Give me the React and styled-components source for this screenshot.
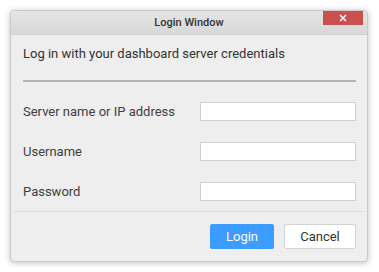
import styled, { createGlobalStyle } from 'styled-components';

const GlobalStyle = createGlobalStyle`
  html, body {
    margin: 0;
    padding: 0;
    background: #ffffff;
  }
  body {
    font-family: Roboto, "Liberation Sans", sans-serif;
  }
`;

const Page = styled.div`
  width: 379px;
  height: 272px;
  padding: 10px 11px 0 10px;
  box-sizing: border-box;
`;

const Window = styled.div`
  width: 358px;
  height: 252px;
  background: #eeeeee;
  border: 1px solid #c9c9c9;
  border-radius: 4px;
  box-shadow: 0 1px 6px rgba(0, 0, 0, 0.25);
  box-sizing: border-box;
  display: flex;
  flex-direction: column;
  overflow: hidden;
`;

const TitleBar = styled.div`
  position: relative;
  height: 23px;
  flex: none;
  background: linear-gradient(#e4e4e4, #d8d8d8);
  border-bottom: 1px solid #d0d0d0;
  display: flex;
  align-items: center;
  justify-content: center;
  font-size: 11px;
  font-weight: 500;
  color: #333333;
`;

const CloseButton = styled.button`
  position: absolute;
  top: -1px;
  right: 4px;
  width: 40px;
  height: 15px;
  border: none;
  padding: 0;
  background: #c9504f;
  display: flex;
  align-items: center;
  justify-content: center;
`;

const Body = styled.div`
  padding: 11px 11px 0 12px;
  flex: 1;
`;

const Intro = styled.div`
  font-size: 13px;
  color: #333333;
  line-height: 16px;
`;

const Divider = styled.div`
  margin-top: 18px;
  height: 2px;
  background: #b4b4b4;
`;

const Form = styled.div`
  margin-top: 20px;
  display: flex;
  flex-direction: column;
  gap: 20px;
`;

const Row = styled.div`
  display: flex;
  align-items: center;
  justify-content: space-between;
  height: 19px;
  & + & {
    margin-top: ${p => p.$nudge || 0}px;
  }
`;

const Label = styled.label`
  font-size: 13px;
  color: #404040;
`;

const Input = styled.input`
  width: 156px;
  height: 19px;
  box-sizing: border-box;
  border: 1px solid #cfcfcf;
  background: #ffffff;
  padding: 0 4px;
  margin: 0;
  outline: none;
`;

const Footer = styled.div`
  border-top: 1px solid #dcdcdc;
  margin: 0 2px;
  height: 48px;
  flex: none;
  display: flex;
  align-items: center;
  justify-content: flex-end;
  gap: 10px;
  padding-right: 9px;
  padding-bottom: 1px;
`;

const Button = styled.button`
  height: 25px;
  width: ${p => p.$width}px;
  box-sizing: border-box;
  border-radius: 2px;
  font-family: Roboto, "Liberation Sans", sans-serif;
  font-size: 13px;
  padding: 0;
  border: 1px solid ${p => (p.$primary ? '#3c9cff' : '#d2d2d2')};
  background: ${p => (p.$primary ? '#3c9cff' : '#ffffff')};
  color: ${p => (p.$primary ? '#ffffff' : '#333333')};
`;

const App = () => (
  <>
    <GlobalStyle />
    <Page>
      <Window>
        <TitleBar>
          Login Window
          <CloseButton aria-label="Close">
            <svg width="8" height="8" viewBox="0 0 8 8">
              <path d="M1 1 L7 7 M7 1 L1 7" stroke="#ffffff" strokeWidth="1.5" />
            </svg>
          </CloseButton>
        </TitleBar>
        <Body>
          <Intro>Log in with your dashboard server credentials</Intro>
          <Divider />
          <Form>
            <Row>
              <Label>Server name or IP address</Label>
              <Input type="text" />
            </Row>
            <Row>
              <Label>Username</Label>
              <Input type="text" />
            </Row>
            <Row $nudge={1}>
              <Label>Password</Label>
              <Input type="password" />
            </Row>
          </Form>
        </Body>
        <Footer>
          <Button $primary $width={64}>Login</Button>
          <Button $width={72}>Cancel</Button>
        </Footer>
      </Window>
    </Page>
  </>
);

export default App;
